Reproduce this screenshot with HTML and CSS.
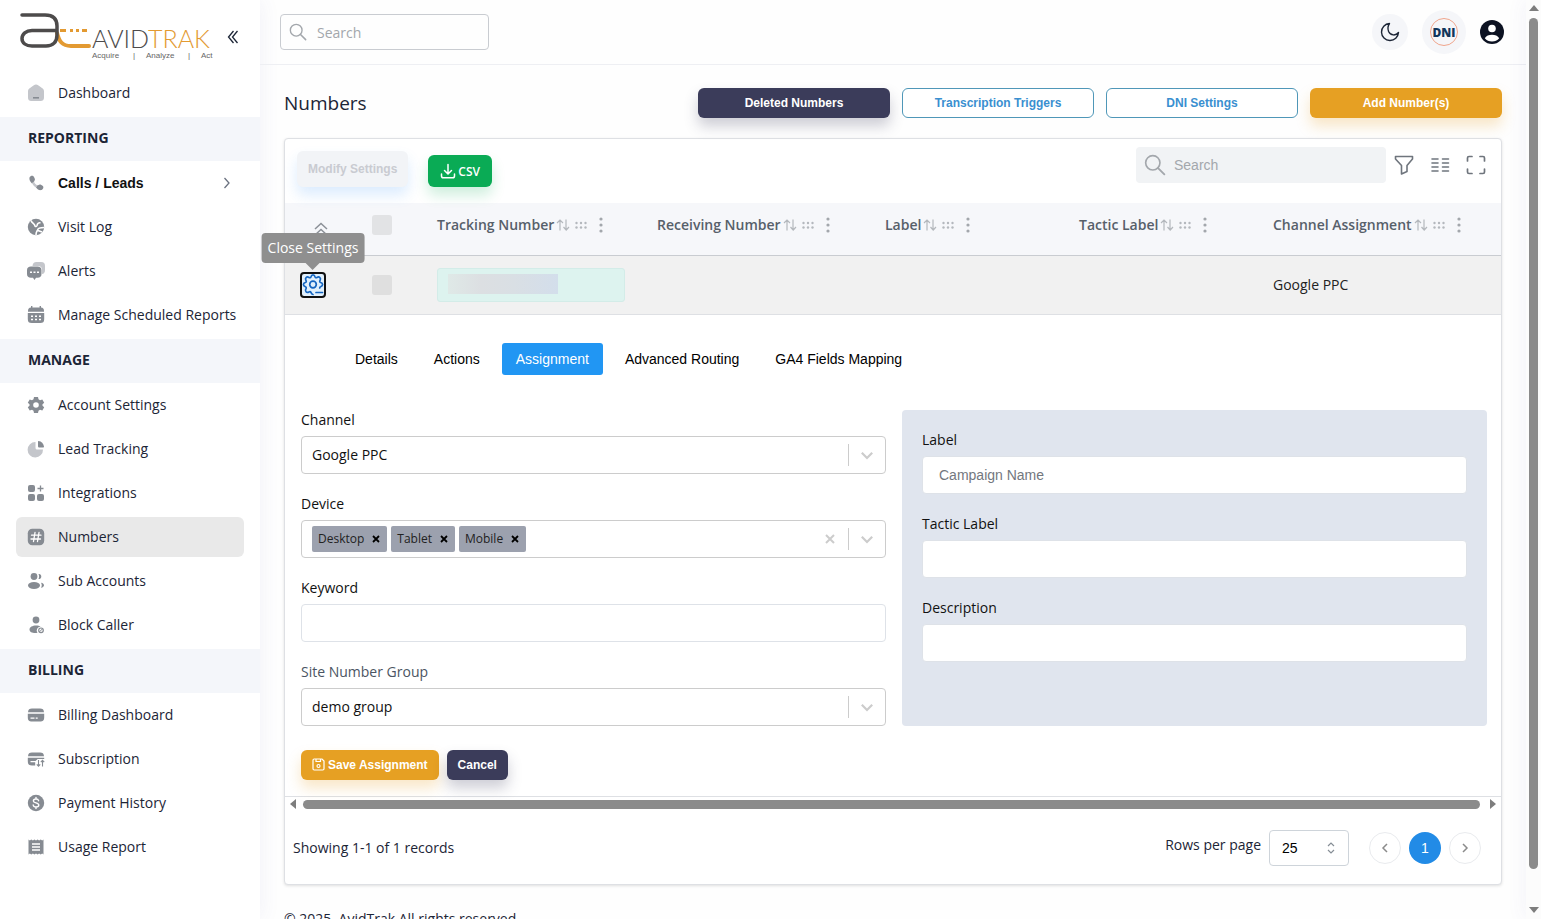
FILE: index.html
```html
<!DOCTYPE html>
<html lang="en">
<head>
    <meta charset="UTF-8">
    <meta name="viewport" content="width=device-width, initial-scale=1.0">
    <title>AvidTrak - Numbers</title>
    <link rel="stylesheet" href="styles.css">
</head>
<body>
    <!-- shared icons -->
    <svg class="sprite" width="0" height="0" aria-hidden="true">
        <symbol id="i-search" viewBox="0 0 20 20"><circle cx="8" cy="8" r="6.5" fill="none" stroke="currentColor" stroke-width="1.5"/><path d="M12.8 12.8 18.5 18.5" fill="none" stroke="currentColor" stroke-width="1.7" stroke-linecap="round"/></symbol>
        <symbol id="i-down" viewBox="0 0 20 20"><path d="M4.8 7.800 10 13l5.200-5.200" fill="none" stroke="currentColor" stroke-width="2.2"/></symbol>
        <symbol id="i-sort" viewBox="0 0 14 14"><path d="M4 12.500V2M1 5l3-3 3 3M10 1.500V12M7.500 9l2.700 3 2.800-3" fill="none" stroke="currentColor" stroke-width="1.200"/></symbol>
        <symbol id="i-drag" viewBox="0 0 12 8"><g fill="currentColor"><circle cx="1.500" cy="2" r="1.200"/><circle cx="6" cy="2" r="1.200"/><circle cx="10.500" cy="2" r="1.200"/><circle cx="1.500" cy="6.500" r="1.200"/><circle cx="6" cy="6.500" r="1.200"/><circle cx="10.500" cy="6.500" r="1.200"/></g></symbol>
        <symbol id="i-more" viewBox="0 0 4 16"><g fill="currentColor"><circle cx="2" cy="2" r="1.600"/><circle cx="2" cy="8" r="1.600"/><circle cx="2" cy="14" r="1.600"/></g></symbol>
    </svg>

    <div class="app">
        <aside class="sidebar">
            <div class="brand">
                <svg class="logo" width="200" height="52" viewBox="0 0 200 52" role="img" aria-label="AvidTrak">
                    <g fill="none" stroke-linecap="round">
                        <path d="M38 22c2 8 5 13 14 13h18" stroke="#e39a32" stroke-width="4"/>
                        <path d="M3 4h23c8 0 12 4 12 11v9c0 7-4 11-11 11H13c-6 0-10-3-10-7.500S7 19.500 13 19.500h24" stroke="#4d4b4b" stroke-width="3.500"/>
                        <path d="M41 19.500h6M51 19.500h3M57 19.500h3M63 19.500h5" stroke="#e39a32" stroke-width="3" stroke-linecap="butt"/>
                    </g>
                    <text class="logo-name" x="73" y="37">AVID<tspan class="logo-accent">TRAK</tspan></text>
                    <text class="logo-tag" x="73" y="47">Acquire</text>
                    <text class="logo-tag" x="114" y="47">|</text>
                    <text class="logo-tag" x="127" y="47">Analyze</text>
                    <text class="logo-tag" x="169" y="47">|</text>
                    <text class="logo-tag" x="182" y="47">Act</text>
                </svg>
                <button class="icon-btn" aria-label="Collapse menu">
                    <svg width="12" height="16" viewBox="0 0 12 16" fill="none" stroke="#1c2536" stroke-width="1.300"><path d="M6.500 2 1.500 8l5 6M10.500 2 5.500 8l5 6"/></svg>
                </button>
            </div>
            <nav>
                <a class="nav-item" href="#">
                    <svg viewBox="0 0 18 18"><path class="soft" d="M1 7.500C1 6 1.500 5 3 4l3.500-2.500c2-1.200 3-1.200 5 0L15 4c1.500 1 2 2 2 3.500V13c0 3-1 4-4 4H5c-3 0-4-1-4-4z"/><path d="M6 13h6v1.600H6z"/></svg>
                    Dashboard
                </a>
                <h2>Reporting</h2>
                <a class="nav-item nav-strong" href="#">
                    <svg viewBox="0 0 18 18"><path d="M2.500 3.500c1-2 3.500-2.500 4.500-.5l.8 1.800c.6 1.500-.8 2-.8 3.200L5 9.500C3 7.500 2 5.500 2.500 3.500z"/><path class="soft" d="M5 9l2-1.500c0 1 2 3.500 3.500 3.700L9 13.500C7.500 12.500 6 11 5 9z"/><path d="M9 13.500l1.500-2.300c1 0 1.500-1.200 3-.7l1.700.9c2 1 1.300 3.600-.8 4.600-2 .6-3.900-.5-5.400-2.500z"/></svg>
                    Calls / Leads
                    <svg class="nav-arrow" viewBox="0 0 10 14"><path d="M2.500 2 7 7l-4.500 5" fill="none" stroke="#6b7280" stroke-width="1.300"/></svg>
                </a>
                <a class="nav-item" href="#">
                    <svg viewBox="0 0 18 18"><circle cx="9" cy="9" r="8.200"/><path d="M4 2.500c1 3 3.500 3 4 5.500.3 1 1.500.5 2-.5C10.500 5 12 4.500 13.500 5M17 9.500c-3 0-6 .5-6.500 2.500-.5 1.500-1.500 2-1.500 5M11 12.500l4 1.500" fill="none" stroke="#fff" stroke-width="1.600"/></svg>
                    Visit Log
                </a>
                <a class="nav-item" href="#">
                    <svg viewBox="0 0 18 18"><path class="soft" d="M9.500 0H14c3 0 4 1.500 4 4v4c0 2.500-1 3.800-3 4V8c0-3-1.500-4-4-4H5.500C5.700 1.500 7 0 9.500 0z"/><path d="M4 4.500h6.500c2.500 0 4 1.200 4 3.800V12c0 2.500-1.500 3.700-4 3.700H9L7.500 18 6 15.700H4C1.500 15.700 0 14.500 0 12V8.300C0 5.700 1.500 4.500 4 4.500z"/><path d="M3 9.500h2v1.500H3zM6.500 9.500h2v1.500h-2zM10 9.500h2v1.500h-2z" fill="#fff"/></svg>
                    Alerts
                </a>
                <a class="nav-item" href="#">
                    <svg viewBox="0 0 18 18"><path d="M4 0h1.400v1.500h7.200V0H14v1.600c2 .2 3 1.400 3 3.400v.8H1V5c0-2 1-3.200 3-3.400z"/><path d="M.8 7h16.400v6c0 3-1.200 4-4 4H4.800c-2.800 0-4-1-4-4z"/><path d="M4 9.500h2V11H4zM8 9.500h2V11H8zM12 9.500h2V11h-2zM4 12.800h2v1.500H4zM8 12.800h2v1.500H8zM12 12.800h2v1.500h-2z" fill="#fff"/></svg>
                    Manage Scheduled Reports
                </a>
                <h2>Manage</h2>
                <a class="nav-item" href="#">
                    <svg viewBox="0 0 18 18"><path fill-rule="evenodd" d="M7 1h4l.5 2.300 1.500.9 2.300-.8 1.900 3.300L15.500 8.200v1.600l1.700 1.500-1.900 3.300-2.300-.8-1.500.9L11 17H7l-.5-2.300-1.500-.9-2.300.8L.8 11.300l1.700-1.500V8.200L.8 6.700l1.900-3.300 2.300.8 1.500-.9zM9 6.200a2.800 2.800 0 1 0 0 5.600 2.800 2.800 0 0 0 0-5.600z"/></svg>
                    Account Settings
                </a>
                <a class="nav-item" href="#">
                    <svg viewBox="0 0 18 18"><path class="soft" d="M8.500 2v5.500c0 1.500.5 2 2 2H16A7.700 7.700 0 1 1 8.500 2z"/><path d="M11.500 1c3 .4 5 2.500 5.500 5.500 0 .8-.4 1-1 1h-3.500c-1 0-1.500-.5-1.500-1.500V1.500c0-.3.200-.5.500-.5z"/></svg>
                    Lead Tracking
                </a>
                <a class="nav-item" href="#">
                    <svg viewBox="0 0 18 18"><rect x="1" y="1" width="7" height="7" rx="2"/><rect x="1" y="10" width="7" height="7" rx="2"/><rect x="10" y="10" width="7" height="7" rx="2"/><path d="M13.500 1.500v6M10.500 4.500h6" fill="none" stroke="#868b92" stroke-width="1.300"/></svg>
                    Integrations
                </a>
                <a class="nav-item active" href="#">
                    <svg viewBox="0 0 18 18"><rect x=".8" y=".8" width="16.400" height="16.400" rx="4.500"/><path d="M8 4.500l-1.500 9M12 4.500l-1.500 9M4.500 7.200h9.500M4 11h9.500" fill="none" stroke="#fff" stroke-width="1.300" stroke-linecap="round"/></svg>
                    Numbers
                </a>
                <a class="nav-item" href="#">
                    <svg viewBox="0 0 18 18"><circle cx="7" cy="4.500" r="3.400"/><ellipse cx="7" cy="13.500" rx="6" ry="3.400"/><path d="M11.500 2c1.500-.5 2.800.8 2.800 2.500S13 7.500 11.500 7c.8-1.600.8-3.400 0-5zM14 10.800c2 .3 3 1.300 3 2.500s-1 2.200-3 2.500c1-1.600 1-3.400 0-5z"/></svg>
                    Sub Accounts
                </a>
                <a class="nav-item" href="#">
                    <svg viewBox="0 0 18 18"><circle cx="9" cy="4" r="3.400"/><path d="M9 9.500c2 0 3.500.4 4.700 1.200A3.800 3.800 0 0 0 10.500 16.800c-4 .6-8-.3-8-3.300 0-2.400 3-4 6.500-4z"/><circle cx="14" cy="14.300" r="2.300" fill="none" stroke="#868b92" stroke-width="1.200"/><path d="M12.500 15.800l3-3" stroke="#868b92"/></svg>
                    Block Caller
                </a>
                <h2>Billing</h2>
                <a class="nav-item" href="#">
                    <svg viewBox="0 0 18 18"><path d="M5 2.500h8c2.600 0 3.800 1 4 3.700H1C1.200 3.500 2.400 2.500 5 2.500z"/><path d="M.8 7.700h16.400V11c0 3.400-1.200 4.500-4.200 4.500H5c-3 0-4.200-1.100-4.200-4.500z"/><path d="M3.500 11.500h4v1.300h-4zM8.700 11.500h2v1.300h-2z" fill="#fff"/></svg>
                    Billing Dashboard
                </a>
                <a class="nav-item" href="#">
                    <svg viewBox="0 0 18 18"><path d="M5 2.500h8c2.600 0 3.800 1 4 3.700H1C1.200 3.500 2.400 2.500 5 2.500z"/><path d="M.8 7.700h16.400v1.300h-6.500L8.500 11H3.500v1.300h4.700v3.200H5c-3 0-4.200-1.100-4.200-4.500z"/><path d="M11.500 10v6M9.800 14.300l1.700 1.900 1.700-1.900M15.500 16.500v-6M13.800 12.200l1.700-1.900 1.700 1.900" fill="none" stroke="#868b92" stroke-width="1.100"/></svg>
                    Subscription
                </a>
                <a class="nav-item" href="#">
                    <svg viewBox="0 0 18 18"><circle cx="9" cy="9" r="8.200"/><path d="M11.600 6.700C11.300 5.500 10.300 5 9 5c-1.500 0-2.600.7-2.600 1.900C6.400 9.500 11.800 8.300 11.800 11c0 1.300-1.200 2-2.800 2s-2.600-.8-2.800-2M9 3.500V5M9 13v1.500" fill="none" stroke="#fff" stroke-width="1.400" stroke-linecap="round"/></svg>
                    Payment History
                </a>
                <a class="nav-item" href="#">
                    <svg viewBox="0 0 18 18"><path d="M1.500 1.500l1.300 1 1.500-1 1.600 1 1.500-1L9 2.500l1.600-1 1.500 1 1.600-1 1.500 1 1.300-1v15l-1.300-1-1.500 1-1.600-1-1.500 1-1.600-1-1.600 1-1.500-1-1.600 1-1.500-1-1.300 1z"/><path d="M5 6h8M5 9h8M5 12h8" stroke="#fff" stroke-width="1.400"/></svg>
                    Usage Report
                </a>
            </nav>
        </aside>

        <div class="main">
            <header class="topbar">
                <label class="top-search">
                    <svg width="18" height="18"><use href="#i-search"/></svg>
                    <input type="search" placeholder="Search" aria-label="Search">
                </label>
                <div class="top-actions">
                    <button class="round-btn" aria-label="Dark mode">
                        <svg width="20" height="20" viewBox="0 0 20 20"><path d="M9.500 1.500A8.500 8.500 0 1 0 18.500 10.500C16 14 10.500 13.800 8.600 9.500 7.600 7 7.800 4 9.500 1.500z" fill="none" stroke="#1c2536" stroke-width="1.400" stroke-linejoin="round"/></svg>
                    </button>
                    <button class="round-btn round-large" aria-label="DNI account"><span class="dni">DNI</span></button>
                    <button class="icon-btn" aria-label="Profile">
                        <svg width="24" height="24" viewBox="0 0 24 24"><circle cx="12" cy="12" r="12" fill="#0c1222"/><circle cx="12" cy="8.500" r="3.800" fill="#fff"/><path d="M4.800 18.200C6 15.700 9 14.700 12 14.700s6 1 7.200 3.500A9.500 9.500 0 0 1 12 21.400a9.500 9.500 0 0 1-7.200-3.200z" fill="#fff"/></svg>
                    </button>
                </div>
            </header>

            <main class="content">
                <div class="page-head">
                    <h1>Numbers</h1>
                    <button class="btn btn-dark btn-wide">Deleted Numbers</button>
                    <button class="btn btn-outline btn-wide">Transcription Triggers</button>
                    <button class="btn btn-outline btn-wide">DNI Settings</button>
                    <button class="btn btn-gold btn-wide">Add Number(s)</button>
                </div>

                <section class="card">
                    <div class="toolbar">
                        <button class="btn btn-modify" disabled>Modify Settings</button>
                        <button class="btn btn-csv">
                            <svg width="16" height="16" viewBox="0 0 16 16" fill="none" stroke="#fff" stroke-width="1.500" stroke-linecap="round" stroke-linejoin="round"><path d="M8 1.500v9M4.500 7.500 8 11l3.500-3.500M1.500 11v2c0 1.200.6 1.800 1.800 1.800h9.400c1.200 0 1.800-.6 1.800-1.800v-2"/></svg>
                            CSV
                        </button>
                        <div class="toolbar-right">
                            <label class="table-search">
                                <svg width="22" height="22"><use href="#i-search"/></svg>
                                <input type="search" placeholder="Search" aria-label="Search numbers">
                            </label>
                            <button class="icon-btn" aria-label="Filter">
                                <svg width="20" height="20" viewBox="0 0 20 20" fill="none" stroke="#6f757d" stroke-width="1.600" stroke-linejoin="round"><path d="M1.500 1.500h17V4L13 10.500v6l-5.500 2.500v-8.500L1.500 4z"/></svg>
                            </button>
                            <button class="icon-btn" aria-label="Columns">
                                <svg width="20" height="20" viewBox="0 0 20 20" stroke="#6f757d" stroke-width="1.600" stroke-linecap="round"><path d="M2 4h6M2 8h6M2 12h6M2 16h6M12.500 4h6M12.500 8h6M12.500 12h6M12.500 16h6"/></svg>
                            </button>
                            <button class="icon-btn" aria-label="Full screen">
                                <svg width="20" height="20" viewBox="0 0 20 20" fill="none" stroke="#6f757d" stroke-width="1.700" stroke-linecap="round" stroke-linejoin="round"><path d="M1.500 6V3c0-1 .5-1.500 1.500-1.500h3M14 1.500h3c1 0 1.500.5 1.500 1.500v3M18.500 14v3c0 1-.5 1.500-1.500 1.500h-3M6 18.500H3c-1 0-1.500-.5-1.500-1.500v-3"/></svg>
                            </button>
                        </div>
                    </div>

                    <table class="numbers">
                        <colgroup>
                            <col class="col-expand">
                            <col class="col-check">
                            <col class="col-tracking">
                            <col class="col-receiving">
                            <col class="col-label">
                            <col class="col-label">
                            <col>
                        </colgroup>
                        <thead>
                            <tr>
                                <th class="cell-expand">
                                    <button class="icon-btn" aria-label="Collapse all">
                                        <svg width="14" height="14" viewBox="0 0 14 14" fill="none" stroke="#8b9097" stroke-width="1.500"><path d="M1 7l6-5.500L13 7M1 13l6-5.500L13 13"/></svg>
                                    </button>
                                </th>
                                <th><input type="checkbox" aria-label="Select all"></th>
                                <th><div class="th">Tracking Number<svg width="14" height="14"><use href="#i-sort"/></svg><svg width="12" height="8"><use href="#i-drag"/></svg><svg width="4" height="16"><use href="#i-more"/></svg></div></th>
                                <th><div class="th">Receiving Number<svg width="14" height="14"><use href="#i-sort"/></svg><svg width="12" height="8"><use href="#i-drag"/></svg><svg width="4" height="16"><use href="#i-more"/></svg></div></th>
                                <th><div class="th">Label<svg width="14" height="14"><use href="#i-sort"/></svg><svg width="12" height="8"><use href="#i-drag"/></svg><svg width="4" height="16"><use href="#i-more"/></svg></div></th>
                                <th><div class="th">Tactic Label<svg width="14" height="14"><use href="#i-sort"/></svg><svg width="12" height="8"><use href="#i-drag"/></svg><svg width="4" height="16"><use href="#i-more"/></svg></div></th>
                                <th><div class="th">Channel Assignment<svg width="14" height="14"><use href="#i-sort"/></svg><svg width="12" height="8"><use href="#i-drag"/></svg><svg width="4" height="16"><use href="#i-more"/></svg></div></th>
                            </tr>
                        </thead>
                        <tbody>
                            <tr class="number-row">
                                <td class="cell-gear">
                                    <div class="gear-wrap">
                                        <button class="gear-btn" aria-describedby="gearTip" aria-label="Close Settings">
                                            <svg width="22" height="22" viewBox="0 0 22 22" fill="none" stroke="#1565c0" stroke-width="1.700" stroke-linecap="round" stroke-linejoin="round"><path d="M11 20.500c-1.200 0-1.500-1-2-2-.4-.8-1.200-1-2-.6-1.200.7-2.300.6-3-.2s-.8-1.900 0-3c.5-.8.200-1.700-.6-2-1.100-.4-2-1-2-2.200s.9-1.700 2-2c.9-.3 1.100-1.200.6-2-.7-1.100-.7-2.100.1-2.900.8-.8 1.800-.8 2.900-.1.800.5 1.700.2 2-.7.3-1.100.9-1.900 2-1.900s1.700.8 2 1.900c.3.900 1.200 1.200 2 .7 1.100-.7 2.100-.7 2.900.1.800.8.800 1.800.1 2.900-.5.800-.3 1.700.6 2 1.100.3 2 .8 2 2s-.9 1.800-2 2.200c-.6.200-.9.600-.9 1.200"/><circle cx="11" cy="10.500" r="3.300"/><path d="M14 18.500h6.500"/></svg>
                                        </button>
                                        <span class="tooltip" role="tooltip" id="gearTip">Close Settings</span>
                                    </div>
                                </td>
                                <td><input type="checkbox" aria-label="Select number"></td>
                                <td><div class="phone"><span class="phone-mask"></span></div></td>
                                <td></td>
                                <td></td>
                                <td></td>
                                <td>Google PPC</td>
                            </tr>
                            <tr>
                                <td class="detail" colspan="7">
                                    <div class="tabs" role="tablist">
                                        <button role="tab">Details</button>
                                        <button role="tab">Actions</button>
                                        <button role="tab" class="selected" aria-selected="true">Assignment</button>
                                        <button role="tab">Advanced Routing</button>
                                        <button role="tab">GA4 Fields Mapping</button>
                                    </div>
                                    <form>
                                        <div class="form-grid">
                                            <div class="fields">
                                                <div class="field">
                                                    <label for="channel">Channel</label>
                                                    <div class="select">
                                                        <select id="channel"><option>Google PPC</option></select>
                                                        <span class="select-arrow"><svg width="20" height="20"><use href="#i-down"/></svg></span>
                                                    </div>
                                                </div>
                                                <div class="field">
                                                    <label for="device">Device</label>
                                                    <div class="multi">
                                                        <span class="chip">Desktop<button type="button" aria-label="Remove Desktop"><svg width="8" height="8" viewBox="0 0 8 8"><path d="M1 1l6 6M7 1 1 7" stroke="#000" stroke-width="1.800"/></svg></button></span>
                                                        <span class="chip">Tablet<button type="button" aria-label="Remove Tablet"><svg width="8" height="8" viewBox="0 0 8 8"><path d="M1 1l6 6M7 1 1 7" stroke="#000" stroke-width="1.800"/></svg></button></span>
                                                        <span class="chip">Mobile<button type="button" aria-label="Remove Mobile"><svg width="8" height="8" viewBox="0 0 8 8"><path d="M1 1l6 6M7 1 1 7" stroke="#000" stroke-width="1.800"/></svg></button></span>
                                                        <input id="device" type="text">
                                                        <button type="button" class="icon-btn clear" aria-label="Clear devices"><svg width="10" height="10" viewBox="0 0 10 10"><path d="M1 1l8 8M9 1 1 9" stroke="#ccc" stroke-width="2"/></svg></button>
                                                        <span class="select-arrow"><svg width="20" height="20"><use href="#i-down"/></svg></span>
                                                    </div>
                                                </div>
                                                <div class="field">
                                                    <label for="keyword">Keyword</label>
                                                    <input class="text-input" id="keyword" type="text">
                                                </div>
                                                <div class="field">
                                                    <label class="muted" for="group">Site Number Group</label>
                                                    <div class="select">
                                                        <select id="group"><option>demo group</option></select>
                                                        <span class="select-arrow"><svg width="20" height="20"><use href="#i-down"/></svg></span>
                                                    </div>
                                                </div>
                                            </div>
                                            <div class="fields panel">
                                                <div class="field">
                                                    <label for="label">Label</label>
                                                    <input class="text-input" id="label" type="text" placeholder="Campaign Name">
                                                </div>
                                                <div class="field">
                                                    <label for="tactic">Tactic Label</label>
                                                    <input class="text-input" id="tactic" type="text">
                                                </div>
                                                <div class="field">
                                                    <label for="description">Description</label>
                                                    <input class="text-input" id="description" type="text">
                                                </div>
                                            </div>
                                        </div>
                                        <div class="form-actions">
                                            <button type="button" class="btn btn-gold btn-save">
                                                <svg width="13" height="13" viewBox="0 0 13 13" fill="none" stroke="#fff" stroke-width="1.200"><path d="M1 2.200C1 1.300 1.300 1 2.200 1H10l2 2v7.800c0 .9-.3 1.200-1.200 1.200H2.200C1.300 12 1 11.700 1 10.800zM4 1v2.500h4.500V1"/><circle cx="6.500" cy="8" r="1.500"/></svg>
                                                Save Assignment
                                            </button>
                                            <button type="button" class="btn btn-dark">Cancel</button>
                                        </div>
                                    </form>
                                </td>
                            </tr>
                        </tbody>
                    </table>

                    <div class="scroll-x" aria-hidden="true">
                        <svg width="6" height="10" viewBox="0 0 6 10"><path d="M6 0v10L0 5z" fill="#7d7d7d"/></svg>
                        <span class="scroll-thumb"></span>
                        <svg width="6" height="10" viewBox="0 0 6 10"><path d="M0 0v10l6-5z" fill="#7d7d7d"/></svg>
                    </div>

                    <div class="pager">
                        <p>Showing 1-1 of 1 records</p>
                        <label for="rows">Rows per page</label>
                        <div class="rows-select">
                            <select id="rows"><option>25</option></select>
                            <svg width="10" height="14" viewBox="0 0 10 14" fill="none" stroke="#868e96" stroke-width="1.200"><path d="M2 5 5 2l3 3M2 9l3 3 3-3"/></svg>
                        </div>
                        <div class="pages">
                            <button class="page" aria-label="Previous page"><svg width="8" height="12" viewBox="0 0 8 12"><path d="M6 2 2 6l4 4" fill="none" stroke="#8b8b8b" stroke-width="1.500"/></svg></button>
                            <button class="page current">1</button>
                            <button class="page" aria-label="Next page"><svg width="8" height="12" viewBox="0 0 8 12"><path d="M2 2l4 4-4 4" fill="none" stroke="#8b8b8b" stroke-width="1.500"/></svg></button>
                        </div>
                    </div>
                </section>

                <footer>© 2025, AvidTrak All rights reserved.</footer>
            </main>
        </div>

        <div class="scroll-y" aria-hidden="true">
            <svg width="10" height="6" viewBox="0 0 10 6"><path d="M0 6h10L5 0z" fill="#7d7d7d"/></svg>
            <span class="scroll-thumb"></span>
            <svg width="10" height="6" viewBox="0 0 10 6"><path d="M0 0h10L5 6z" fill="#7d7d7d"/></svg>
        </div>
    </div>
</body>
</html>
```
FILE: styles.css
```css
* { box-sizing: border-box; }
body {
    margin: 0;
    font-family: "Open Sans", sans-serif;
    font-size: 14px;
    line-height: 20px;
    color: #1c2536;
    background-color: #fefefe;
}
button, input, select {
    font-family: "Liberation Sans", Arial, sans-serif;
    font-size: 14px;
}
button { cursor: pointer; }
svg { display: block; flex-shrink: 0; }
h1, h2, p { margin: 0; }
.sprite { position: absolute; }
.app {
    display: flex;
    height: 100vh;
    overflow: hidden;
}
.icon-btn {
    display: flex;
    padding: 0;
    border: none;
    background: none;
}

/* sidebar */
.sidebar {
    width: 260px;
    flex-shrink: 0;
    background-color: #fff;
    box-shadow: 0 0 20px rgba(80, 80, 160, 0.08);
}
.brand {
    display: flex;
    align-items: center;
    gap: 8px;
    height: 73px;
    padding: 0 18px 0 19px;
}
.logo-name {
    font-family: Lato, sans-serif;
    font-size: 25px;
    font-weight: 300;
    fill: #4d4b4b;
}
.logo-accent { fill: #e39a32; }
.logo-tag {
    font-family: "Liberation Sans", Arial, sans-serif;
    font-size: 8px;
    fill: #666;
}
.sidebar h2 {
    height: 44px;
    margin-bottom: 2px;
    padding: 11px 28px;
    font-size: 14px;
    line-height: 20px;
    text-transform: uppercase;
    background-color: #f4f6fa;
}
.nav-item {
    display: flex;
    align-items: center;
    gap: 13px;
    height: 40px;
    margin: 0 16px 4px;
    padding: 0 12px 0 11px;
    border-radius: 6px;
    color: #1c2536;
    text-decoration: none;
    white-space: nowrap;
}
.nav-item svg {
    width: 18px;
    height: 18px;
    fill: #868b92;
}
.nav-item .soft { fill: #c4c6cb; }
.nav-item .nav-arrow {
    width: 10px;
    height: 14px;
    margin-left: auto;
}
.nav-strong {
    font-family: "Liberation Sans", Arial, sans-serif;
    font-weight: bold;
    color: #111;
}
.nav-item.active { background-color: #e9e9e9; }

/* top bar */
.main {
    flex: 1;
    min-width: 0;
}
.topbar {
    display: flex;
    align-items: center;
    justify-content: space-between;
    height: 65px;
    padding: 0 22px 0 20px;
    border-bottom: 1px solid #eeeff3;
}
.top-search, .table-search {
    display: flex;
    align-items: center;
    height: 36px;
    color: #a3a7ac;
}
.top-search {
    width: 209px;
    gap: 10px;
    padding: 0 8px;
    border: 1px solid #c9ccd1;
    border-radius: 4px;
}
.top-search input, .table-search input {
    width: 100%;
    min-width: 0;
    padding: 0;
    border: none;
    outline: none;
    background: none;
}
.top-search input { font-family: "Open Sans", sans-serif; }
input::placeholder { color: #a3a7ac; opacity: 1; }
.top-actions {
    display: flex;
    align-items: center;
    gap: 14px;
}
.round-btn {
    display: flex;
    align-items: center;
    justify-content: center;
    width: 36px;
    height: 36px;
    padding: 0;
    border: none;
    border-radius: 50%;
    background-color: #f5f6f9;
}
.round-large { width: 44px; height: 44px; }
.dni {
    display: flex;
    align-items: center;
    justify-content: center;
    width: 28px;
    height: 28px;
    border: 1px solid #f0a58c;
    border-radius: 50%;
    font-family: "Open Sans", sans-serif;
    font-size: 12px;
    font-weight: 800;
    color: #12365c;
}

/* page */
.content { padding: 23px 24px 0; }
.page-head {
    display: flex;
    align-items: center;
    gap: 12px;
}
h1 {
    flex: 1;
    font-size: 19px;
    font-weight: 400;
    line-height: 28px;
}
.btn {
    display: flex;
    align-items: center;
    justify-content: center;
    gap: 4px;
    height: 30px;
    padding: 0 11px;
    border: none;
    border-radius: 6px;
    font-size: 12px;
    font-weight: bold;
    color: #fff;
}
.btn-wide { width: 192px; }
.btn-dark {
    background-color: #3b3c5a;
    box-shadow: 0 8px 14px rgba(59, 60, 90, 0.25);
}
.btn-gold {
    background-color: #e6a023;
    box-shadow: 0 8px 14px rgba(230, 160, 35, 0.25);
}
.btn-outline {
    border: 1px solid #4f97b8;
    color: #3a8fd0;
    background-color: #fff;
}
.card {
    margin-top: 20px;
    border: 1px solid #dee0e4;
    border-radius: 4px;
    background-color: #fff;
    box-shadow: 0 1px 3px rgba(0, 0, 0, 0.12);
}
.toolbar {
    display: flex;
    align-items: flex-start;
    height: 64px;
    padding: 12px 15px 0 12px;
}
.btn-modify {
    height: 36px;
    color: #c9cbd1;
    background-color: #f2f4f7;
    box-shadow: 0 8px 14px rgba(60, 150, 250, 0.18);
}
.btn-csv {
    height: 32px;
    margin: 4px 0 0 20px;
    padding: 0 12px;
    gap: 2px;
    font-family: "Open Sans", sans-serif;
    font-weight: 600;
    background-color: #0aab55;
    box-shadow: 0 8px 14px rgba(10, 171, 85, 0.2);
}
.toolbar-right {
    display: flex;
    align-items: center;
    gap: 16px;
    height: 36px;
    margin: -4px 0 0 auto;
}
.table-search {
    width: 250px;
    margin-right: -8px;
    padding: 0 8px;
    gap: 8px;
    border-radius: 4px;
    background-color: #f1f3f5;
}

/* table */
.numbers {
    width: 100%;
    border-collapse: collapse;
    table-layout: fixed;
    color: #222;
}
.col-expand { width: 71px; }
.col-check { width: 65px; }
.col-tracking { width: 220px; }
.col-receiving { width: 228px; }
.col-label { width: 194px; }
.numbers th {
    height: 52px;
    padding: 0 16px 8px;
    text-align: left;
    font-weight: 600;
    color: #57606a;
    background-color: #f6f7fa;
    border-bottom: 1px solid #c9ccd1;
}
.numbers .cell-expand { padding: 0; }
.cell-expand .icon-btn { margin: 0 auto; }
.th {
    display: flex;
    align-items: center;
    white-space: nowrap;
    gap: 2px;
}
.th svg { color: #b4b8bd; }
.th svg + svg { margin-left: 3px; }
.th svg:last-child { margin-left: 10px; color: #a3a7ac; }
.numbers input[type="checkbox"] {
    display: block;
    appearance: none;
    width: 20px;
    height: 20px;
    margin: 0;
    border-radius: 3px;
    background-color: #e2e3e5;
}
.number-row td {
    height: 59px;
    padding: 0 16px;
    background-color: #f1f1f1;
    border-bottom: 1px solid #dee0e4;
}
.number-row .cell-gear { padding: 0 15px; }
.number-row input[type="checkbox"] { background-color: #dfdfdf; }
.gear-wrap {
    position: relative;
    width: 26px;
}
.gear-btn {
    display: flex;
    align-items: center;
    justify-content: center;
    width: 26px;
    height: 26px;
    padding: 0;
    border: 2px solid #101010;
    border-radius: 4px;
    background-color: #e1f0fc;
}
.tooltip {
    position: absolute;
    bottom: 35px;
    left: 50%;
    transform: translateX(-50%);
    padding: 5px 6px;
    border-radius: 4px;
    font-size: 14px;
    line-height: 20px;
    white-space: nowrap;
    color: #fff;
    background-color: #8f8f8f;
}
.tooltip::after {
    content: "";
    position: absolute;
    top: 100%;
    left: 50%;
    margin-left: -7px;
    border: 7px solid transparent;
    border-top-color: #8f8f8f;
}
.phone {
    height: 34px;
    padding: 5px 10px;
    border: 1px solid #d3ece8;
    border-radius: 3px;
    background-color: #ddf3ef;
}
.phone-mask {
    display: block;
    width: 110px;
    height: 20px;
    background: linear-gradient(90deg, #dfe9e7, #dcdfe2 30%, #d9dfe4 60%, #d3deeb);
}

/* settings */
.numbers .detail { padding: 28px 14px 16px 16px; }
.tabs {
    display: flex;
    gap: 8px;
    margin-left: 40px;
}
.tabs button {
    height: 32px;
    padding: 0 14px;
    border: none;
    border-radius: 3px;
    color: #000;
    background: none;
}
.tabs .selected {
    color: #fff;
    background-color: #2196f3;
}
.form-grid {
    display: grid;
    grid-template-columns: 1fr 1fr;
    gap: 16px;
    margin-top: 35px;
}
.fields {
    display: flex;
    flex-direction: column;
    gap: 20px;
}
.field {
    display: flex;
    flex-direction: column;
    gap: 6px;
}
.field label { color: #111; }
.field .muted { color: #4b5563; }
.panel {
    padding: 20px;
    border-radius: 4px;
    background-color: #e0e5ee;
}
.text-input {
    width: 100%;
    height: 38px;
    padding: 0 16px;
    border: 1px solid #dee2e8;
    border-radius: 4px;
    background-color: #fff;
}
.text-input::placeholder { color: #73777e; }
.select, .multi {
    display: flex;
    align-items: center;
    height: 38px;
    border: 1px solid #ccc;
    border-radius: 4px;
    background-color: #fff;
}
.select select {
    flex: 1;
    height: 36px;
    padding: 0 10px;
    appearance: none;
    border: none;
    font-family: "Open Sans", sans-serif;
    color: #111;
    background: none;
}
.select-arrow {
    padding: 1px 8px;
    border-left: 1px solid #ccc;
    color: #ccc;
}
.multi {
    gap: 4px;
    padding-left: 10px;
}
.multi input {
    flex: 1;
    min-width: 0;
    border: none;
    outline: none;
}
.clear { margin-right: 9px; }
.chip {
    display: flex;
    align-items: center;
    height: 26px;
    padding-left: 6px;
    border-radius: 2px;
    font-size: 12px;
    color: #222;
    background-color: #9ca1ae;
}
.chip button {
    padding: 0 7px 0 8px;
    border: none;
    background: none;
}
.form-actions {
    display: flex;
    gap: 8px;
    margin-top: 24px;
}
.btn-save { gap: 3px; }

/* scrollbars */
.scroll-x {
    display: flex;
    align-items: center;
    gap: 7px;
    height: 16px;
    padding: 0 5px;
    border-top: 1px solid #dee0e4;
}
.scroll-thumb {
    flex: 1;
    border-radius: 5px;
    background-color: #8b8b8b;
}
.scroll-x .scroll-thumb { height: 9px; }
.scroll-x svg:last-child { margin-left: 3px; }
.scroll-y {
    display: flex;
    flex-direction: column;
    align-items: center;
    gap: 7px;
    width: 15px;
    padding: 5px 0 6px;
    background-color: #fcfcfc;
    box-shadow: 0 0 20px rgba(80, 80, 160, 0.08);
}
.scroll-y .scroll-thumb { width: 9px; }
.scroll-y svg:last-child { margin-top: 31px; }

/* pager */
.pager {
    display: flex;
    align-items: center;
    height: 72px;
    padding: 0 20px 0 8px;
}
.pager p { flex: 1; }
.pager label { margin: 0 8px 6px 0; }
.rows-select {
    display: flex;
    align-items: center;
    width: 80px;
    height: 36px;
    padding-right: 12px;
    border: 1px solid #ced4da;
    border-radius: 4px;
}
.rows-select select {
    flex: 1;
    min-width: 0;
    height: 34px;
    padding: 0 12px;
    appearance: none;
    border: none;
    background: none;
    color: #000;
}
.pages {
    display: flex;
    gap: 8px;
    margin-left: 20px;
}
.page {
    display: flex;
    align-items: center;
    justify-content: center;
    width: 32px;
    height: 32px;
    padding: 0;
    border: 1px solid #e9ebee;
    border-radius: 50%;
    background-color: #fff;
}
.page.current {
    border: none;
    color: #fff;
    background-color: #228be6;
}
footer { margin-top: 24px; white-space: nowrap; }
```
